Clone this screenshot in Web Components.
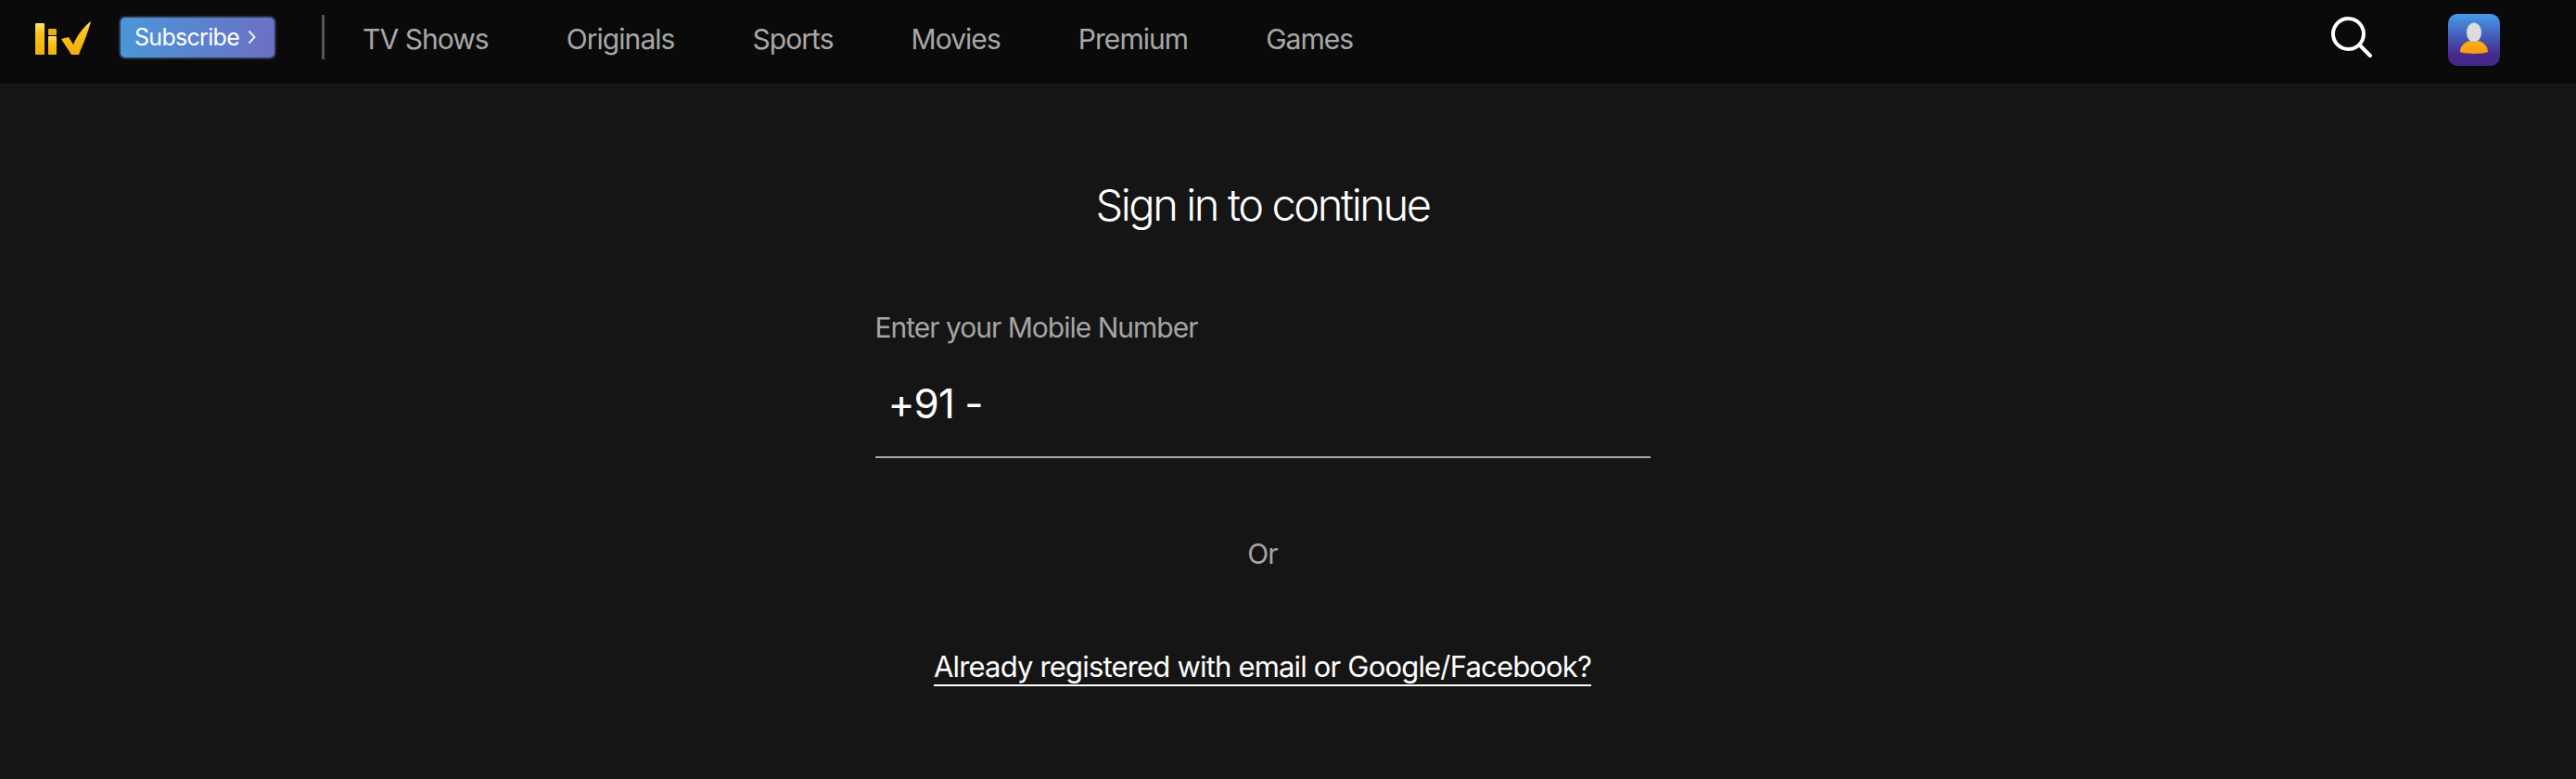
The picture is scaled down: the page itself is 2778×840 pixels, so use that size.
<!DOCTYPE html>
<html>
<head>
<meta charset="utf-8">
<style>
  html, body { margin:0; padding:0; background:#151515; }
  body { font-family:Inter, "Liberation Sans", sans-serif; width:2778px; height:840px; overflow:hidden; }
</style>
</head>
<body>
<liv-header></liv-header>
<sign-in></sign-in>
<script>
class NavLink extends HTMLElement {
  constructor() {
    super();
    this.attachShadow({ mode: 'open' });
    this.shadowRoot.innerHTML = `
      <style>
        :host { display:block; color:#a8a8a8; font-size:30px; letter-spacing:-.95px; line-height:36px; white-space:nowrap; }
      </style>
      <slot></slot>
    `;
  }
}
customElements.define('nav-link', NavLink);

class LivHeader extends HTMLElement {
  constructor() {
    super();
    this.attachShadow({ mode: 'open' });
    this.shadowRoot.innerHTML = `
      <style>
        :host { display:flex; align-items:center; height:90px; background:#0a0a0a; box-sizing:border-box; padding-left:38px; padding-right:82px; }
        .logo { display:block; width:60px; height:37px; margin-right:30px; margin-top:-8px; filter:blur(.5px); }
        .sub { box-sizing:border-box; width:170px; height:47px; margin-top:-10px; border:2px solid #2b3346; border-radius:7px; background:linear-gradient(95deg,#4a97d8,#6c6fc4); color:#fff; font-size:25px; letter-spacing:-.7px; display:flex; align-items:center; padding-left:15px; white-space:nowrap; }
        .sub svg { margin-left:9px; }
        .div { width:3px; height:48px; background:#555; margin:-10px 41px 0 49px; }
        nav { display:flex; gap:84px; margin-top:-6px; }
        .right { margin-left:auto; display:flex; align-items:flex-start; gap:82px; margin-top:-2px; }
        .avatar { display:block; margin-top:-3px; }
      </style>
      <svg class="logo" viewBox="0 0 60 37">
        <defs><linearGradient id="y" x1="0" y1="0" x2="0" y2="1"><stop offset="0" stop-color="#fbe27a"/><stop offset=".3" stop-color="#fdc41a"/><stop offset="1" stop-color="#f0ad10"/></linearGradient></defs>
        <rect x="0" y="2" width="10" height="34" rx="1" fill="url(#y)"/>
        <rect x="14" y="8" width="9" height="7" rx="1" fill="#e9b016"/>
        <rect x="14" y="16" width="9" height="20" rx="1" fill="url(#y)"/>
        <path d="M28 19 L36 17 L41 25 C46 14 52 6 60 0 C57 12 51 26 47 36 L39 36 Z" fill="url(#y)"/>
      </svg>
      <div class="sub">Subscribe<svg width="9" height="16" viewBox="0 0 9 16"><path d="M1.5 1.5 L7.5 8 L1.5 14.5" fill="none" stroke="#e8ecf6" stroke-width="2"/></svg></div>
      <div class="div"></div>
      <nav>
        <nav-link>TV Shows</nav-link>
        <nav-link>Originals</nav-link>
        <nav-link>Sports</nav-link>
        <nav-link>Movies</nav-link>
        <nav-link>Premium</nav-link>
        <nav-link>Games</nav-link>
      </nav>
      <div class="right">
        <svg width="44" height="44" viewBox="0 0 44 44">
          <circle cx="18.5" cy="18.5" r="16.5" fill="none" stroke="#fff" stroke-width="4"/>
          <path d="M31 31 L42 42" stroke="#fff" stroke-width="4" stroke-linecap="round"/>
        </svg>
        <svg class="avatar" width="56" height="56" viewBox="0 0 56 56">
          <defs>
            <linearGradient id="a" x1="0" y1="0" x2="0" y2="1"><stop offset="0" stop-color="#469bec"/><stop offset=".8" stop-color="#45288a"/><stop offset="1" stop-color="#45288a"/></linearGradient>
            <linearGradient id="b" x1="0" y1="0" x2="0" y2="1"><stop offset="0" stop-color="#ffb412"/><stop offset="1" stop-color="#ff970e"/></linearGradient>
          </defs>
          <rect width="56" height="56" rx="10" fill="url(#a)"/>
          <ellipse cx="28" cy="20" rx="8" ry="10.5" fill="#dcdcdc"/>
          <path d="M13 41 C13 34 18 31 23 29 Q28 32 33 29 C38 31 43 34 43 41 C37 43.5 19 43.5 13 41 Z" fill="url(#b)"/>
        </svg>
      </div>
    `;
  }
}
customElements.define('liv-header', LivHeader);

class SignIn extends HTMLElement {
  constructor() {
    super();
    this.attachShadow({ mode: 'open' });
    this.shadowRoot.innerHTML = `
      <style>
        :host { display:flex; flex-direction:column; align-items:center; color:#fff; padding-right:55px; }
        h1 { margin:102px 0 0; font-size:47px; font-weight:300; line-height:58px; letter-spacing:-2.4px; }
        .form { width:836px; margin-top:85px; }
        label { display:block; color:#a5a5a5; font-size:30px; line-height:36px; letter-spacing:-1px; }
        .phone { box-sizing:border-box; height:123px; padding:37px 0 0 14px; border-bottom:2px solid #a9a9a9; font-size:44px; line-height:54px; letter-spacing:-1px; }
        .or { margin-top:85px; color:#a5a5a5; font-size:30px; line-height:36px; letter-spacing:-.8px; }
        a { display:block; margin-top:85px; color:#fff; font-size:31px; line-height:38px; letter-spacing:-.82px; border-bottom:2px solid #fff; text-decoration:none; }
      </style>
      <h1>Sign in to continue</h1>
      <div class="form">
        <label>Enter your Mobile Number</label>
        <div class="phone">+91 -</div>
      </div>
      <div class="or">Or</div>
      <a>Already registered with email or Google/Facebook?</a>
    `;
  }
}
customElements.define('sign-in', SignIn);
</script>
</body>
</html>
